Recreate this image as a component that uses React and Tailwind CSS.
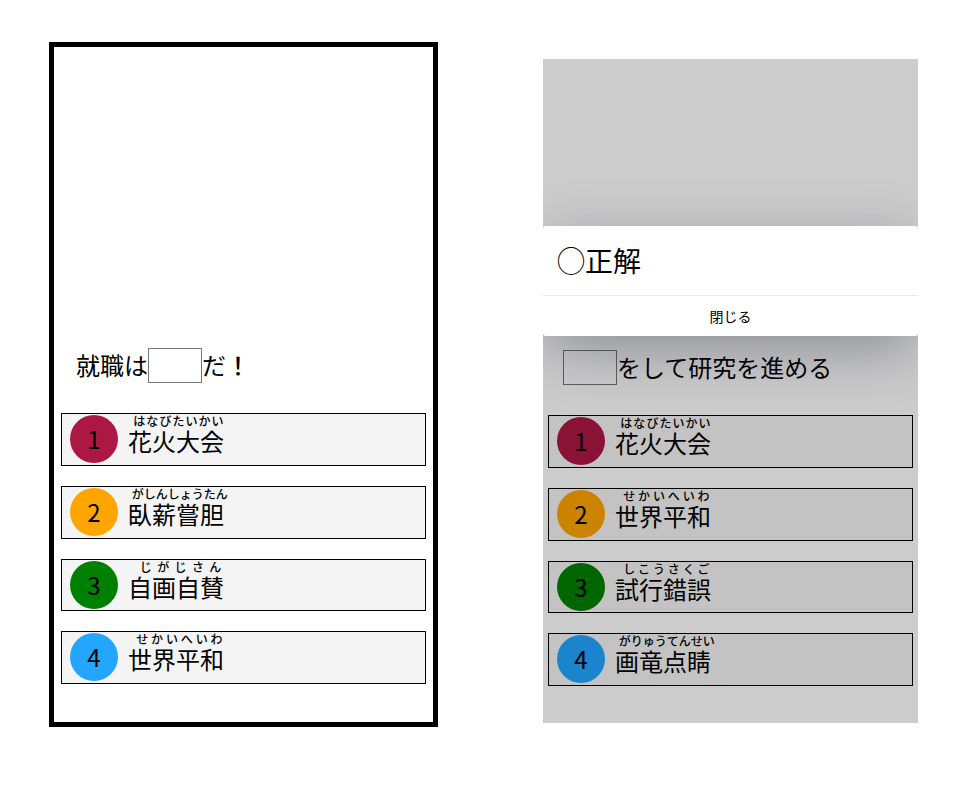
const leftChoices = [
  { text: '花火大会', kana: 'はなびたいかい' },
  { text: '臥薪嘗胆', kana: 'がしんしょうたん' },
  { text: '自画自賛', kana: 'じがじさん' },
  { text: '世界平和', kana: 'せかいへいわ' },
];

const rightChoices = [
  { text: '花火大会', kana: 'はなびたいかい' },
  { text: '世界平和', kana: 'せかいへいわ' },
  { text: '試行錯誤', kana: 'しこうさくご' },
  { text: '画竜点睛', kana: 'がりゅうてんせい' },
];

const circleColors = ['bg-[#ac1744]', 'bg-[#ffa500]', 'bg-[#008000]', 'bg-[#24a5ff]'];

function Choices({ items }) {
  return (
    <ol className="grid min-h-[271px] auto-rows-fr gap-5">
      {items.map((item, i) => (
        <li key={item.text}>
          <button
            type="button"
            className="flex h-full w-full items-start gap-[10px] border border-black bg-[#f4f4f4] pt-px pl-2 text-left"
          >
            <span
              className={`flex size-12 shrink-0 items-center justify-center rounded-full ${circleColors[i]}`}
            >
              {i + 1}
            </span>
            <ruby className="font-['DejaVu_Sans','Noto_Sans_CJK_JP',sans-serif] leading-[37px] [ruby-align:start]">
              {item.text}
              <rt className="font-medium leading-[37px] [ruby-align:space-around]">
                {'\u00a0' + item.kana}
              </rt>
            </ruby>
          </button>
        </li>
      ))}
    </ol>
  );
}

function Question({ before, after, mark }) {
  return (
    <p className="flex items-start leading-[34px]">
      {before}
      <input
        type="text"
        aria-label="空欄"
        className="h-[35px] w-[54px] border border-[#767676] bg-white"
      />
      {after}
      {mark && <span className="font-medium">{mark}</span>}
    </p>
  );
}

export default function App() {
  return (
    <main
      lang="ja"
      className="grid min-h-screen grid-cols-[389fr_375fr] items-start gap-[105px] bg-white pt-[42px] pr-[38px] pb-12 pl-[49px] font-['Noto_Sans_CJK_JP',sans-serif] text-2xl text-black"
    >
      <section className="border-5 border-black px-[7px] pt-[301px] pb-[38px]">
        <div className="mb-[30px] pl-[15px]">
          <Question before="就職は" after="だ" mark="！" />
        </div>
        <Choices items={leftChoices} />
      </section>

      <section className="relative mt-[17px] overflow-hidden px-[5px] pt-[291px] pb-[37px]">
        <div className="mb-[30px] pl-[15px]">
          <Question after="をして研究を進める" />
        </div>
        <Choices items={rightChoices} />

        <div className="absolute inset-0 bg-black/20 pt-[167px]">
          <div
            role="dialog"
            aria-labelledby="result-title"
            className="rounded-[3px] bg-white shadow-[0_16px_60px_-4px_rgba(28,32,54,0.38)]"
          >
            <h2 id="result-title" className="px-[14px] py-[14px] text-[28px] leading-[41px]">
              ◯正解
            </h2>
            <button
              type="button"
              className="block h-[41px] w-full border-t border-[#e8e8e8] text-sm"
            >
              閉じる
            </button>
          </div>
        </div>
      </section>
    </main>
  );
}
